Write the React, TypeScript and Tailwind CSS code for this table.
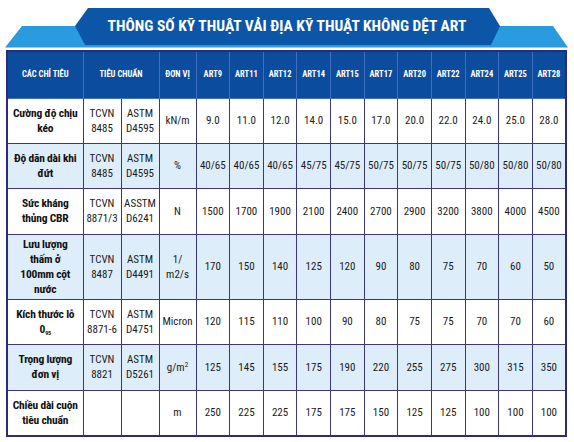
import React from "react";

type Row = { name: React.ReactNode; tcvn: React.ReactNode; astm: React.ReactNode; unit: React.ReactNode; vals: string[]; h: string; alt: boolean };

const rows: Row[] = [
  { name: <>Cường độ chịu<br />kéo</>, tcvn: <>TCVN<br />8485</>, astm: <>ASTM<br />D4595</>, unit: "kN/m", vals: ["9.0","11.0","12.0","14.0","15.0","17.0","20.0","22.0","24.0","25.0","28.0"], h: "h-[45px]", alt: false },
  { name: <>Độ dãn dài khi<br />đứt</>, tcvn: <>TCVN<br />8485</>, astm: <>ASTM<br />D4595</>, unit: "%", vals: ["40/65","40/65","40/65","45/75","45/75","50/75","50/75","50/75","50/80","50/80","50/80"], h: "h-[45px]", alt: true },
  { name: <>Sức kháng<br />thủng CBR</>, tcvn: <>TCVN<br />8871/3</>, astm: <>ASSTM<br />D6241</>, unit: "N", vals: ["1500","1700","1900","2100","2400","2700","2900","3200","3800","4000","4500"], h: "h-[46px]", alt: false },
  { name: <>Lưu lượng<br />thấm ở<br />100mm cột<br />nước</>, tcvn: <>TCVN<br />8487</>, astm: <>ASTM<br />D4491</>, unit: <>1/<br />m2/s</>, vals: ["170","150","140","125","120","90","80","75","70","60","50"], h: "h-[65px]", alt: true },
  { name: <>Kích thước lỗ<br />0<sub className="text-[6px] align-baseline relative top-[2px]">95</sub></>, tcvn: <>TCVN<br />8871-6</>, astm: <>ASTM<br />D4751</>, unit: "Micron", vals: ["120","115","110","100","90","80","75","75","70","70","60"], h: "h-[45px]", alt: false },
  { name: <>Trọng lượng<br />đơn vị</>, tcvn: <>TCVN<br />8821</>, astm: <>ASTM<br />D5261</>, unit: <>g/m<sup className="text-[7px]">2</sup></>, vals: ["125","145","155","175","190","220","255","275","300","315","350"], h: "h-[46px]", alt: true },
  { name: <>Chiều dài cuộn<br />tiêu chuẩn</>, tcvn: "", astm: "", unit: "m", vals: ["250","225","225","175","175","150","125","125","100","100","100"], h: "h-[46px]", alt: false },
];

const arts = ["ART9","ART11","ART12","ART14","ART15","ART17","ART20","ART22","ART24","ART25","ART28"];

export default function App() {
  return (
    <div className="w-[574px] h-[442px] bg-white overflow-hidden font-['Roboto_Condensed',sans-serif]">
      <div className="relative h-[50px]">
        <svg className="absolute inset-0" width="574" height="50" viewBox="0 0 574 50">
          <polygon points="22,26 553,26 568,47.5 5,47.5" fill="#2b9be0" />
          <polygon points="88,8 489,8 500,26 491,45 85,45 75,26" fill="#0c56a8" />
        </svg>
        <div className="absolute left-0 right-0 top-[8px] h-[37px] flex items-center justify-center">
          <span className="text-white font-bold text-[15.5px] leading-none">THÔNG SỐ KỸ THUẬT VẢI ĐỊA KỸ THUẬT KHÔNG DỆT ART</span>
        </div>
      </div>
      <div className="px-[6px]">
        <table className="w-[561px] table-fixed border-collapse border-2 border-[#2d2a7e] text-center text-[11px] leading-[15px] text-[#1a1a1a]">
          <colgroup>
            <col className="w-[76px]" />
            <col className="w-[38px]" />
            <col className="w-[38px]" />
            <col className="w-[37px]" />
            {arts.map((a) => <col key={a} />)}
          </colgroup>
          <thead>
            <tr className="h-[47px] bg-[#0b4c9f] text-white text-[8.5px]">
              <th className="border border-[#3d6fc0] font-bold">CÁC CHỈ TIÊU</th>
              <th colSpan={2} className="border border-[#3d6fc0] font-bold">TIÊU CHUẨN</th>
              <th className="border border-[#3d6fc0] font-bold">ĐƠN VỊ</th>
              {arts.map((a) => (
                <th key={a} className="border border-[#3d6fc0] font-bold">{a}</th>
              ))}
            </tr>
          </thead>
          <tbody>
            {rows.map((r, i) => (
              <tr key={i} className={`${r.h} ${r.alt ? "bg-[#deedfa]" : "bg-white"}`}>
                <td className="border border-[#3a3585] font-bold text-[11.5px] tracking-[-0.2px] text-[#111]">{r.name}</td>
                <td className="border border-[#3a3585]">{r.tcvn}</td>
                <td className="border border-[#3a3585]">{r.astm}</td>
                <td className="border border-[#3a3585]">{r.unit}</td>
                {r.vals.map((v, j) => (
                  <td key={j} className="border border-[#3a3585]">{v}</td>
                ))}
              </tr>
            ))}
          </tbody>
        </table>
      </div>
    </div>
  );
}
